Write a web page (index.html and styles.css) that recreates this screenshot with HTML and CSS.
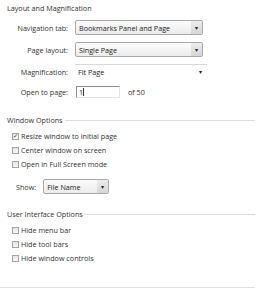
FILE: index.html
```html
<!DOCTYPE html>
<html lang="en">
<head>
    <meta charset="UTF-8">
    <meta name="viewport" content="width=device-width, initial-scale=1.0">
    <title>Initial View</title>
    <link rel="stylesheet" href="styles.css">
</head>
<body>
    <div class="panel">
        <div class="section-title plain">Layout and Magnification</div>
        <div class="form-grid">
            <label class="form-label">Navigation tab:</label>
            <div class="dropdown wide">
                <span class="dropdown-text">Bookmarks Panel and Page</span>
                <span class="dropdown-btn">&#9662;</span>
            </div>

            <label class="form-label">Page layout:</label>
            <div class="dropdown wide">
                <span class="dropdown-text">Single Page</span>
                <span class="dropdown-btn">&#9662;</span>
            </div>

            <label class="form-label">Magnification:</label>
            <div class="combo">
                <span class="dropdown-text">Fit Page</span>
                <span class="combo-arrow">&#9662;</span>
            </div>

            <label class="form-label">Open to page:</label>
            <div class="page-row">
                <div class="page-input">1<span class="caret"></span></div>
                <span class="page-total">of 50</span>
            </div>
        </div>

        <div class="section-title spaced">Window Options</div>
        <div class="check-list">
            <div class="check-row"><span class="check-box checked">&#10003;</span>Resize window to initial page</div>
            <div class="check-row"><span class="check-box"></span>Center window on screen</div>
            <div class="check-row"><span class="check-box"></span>Open in Full Screen mode</div>
        </div>
        <div class="show-row">
            <label class="show-label">Show:</label>
            <div class="dropdown narrow">
                <span class="dropdown-text">File Name</span>
                <span class="dropdown-btn">&#9662;</span>
            </div>
        </div>

        <div class="section-title ui-title">User Interface Options</div>
        <div class="check-list">
            <div class="check-row"><span class="check-box"></span>Hide menu bar</div>
            <div class="check-row"><span class="check-box"></span>Hide tool bars</div>
            <div class="check-row"><span class="check-box"></span>Hide window controls</div>
        </div>
        <div class="bottom-rule"></div>
    </div>
</body>
</html>
```

FILE: styles.css
```css
body {
    margin: 0;
    background-color: #ffffff;
    font-family: "Open Sans", Arial, sans-serif;
    font-size: 7.2px;
    color: #333333;
}
.panel {
    width: 255px;
    padding-top: 3px;
}
.section-title {
    display: flex;
    align-items: center;
    height: 10px;
    padding-left: 7px;
    color: #333333;
}
.section-title::after {
    content: "";
    flex: 1;
    margin-left: 2px;
    border-top: 1px solid #dedede;
}
.section-title.plain::after {
    border-top-color: transparent;
}
.section-title.spaced {
    margin-top: 17px;
}
.section-title.ui-title {
    margin-top: 15px;
}
.form-grid {
    display: grid;
    grid-template-columns: 68px auto;
    grid-template-rows: 15px 15px 15px 12px;
    column-gap: 7px;
    row-gap: 7px;
    margin-top: 7px;
}
.form-label {
    text-align: right;
    align-self: center;
}
.dropdown {
    display: flex;
    align-items: center;
    box-sizing: border-box;
    height: 15px;
    border: 1px solid #a9a9a9;
    border-radius: 2px;
    background: linear-gradient(#fbfbfb, #ececec);
}
.dropdown.wide {
    width: 128px;
}
.dropdown.narrow {
    width: 66px;
}
.dropdown-text {
    flex: 1;
    padding-left: 3px;
    color: #222222;
}
.dropdown-btn {
    width: 11px;
    height: 100%;
    display: flex;
    align-items: center;
    justify-content: center;
    font-size: 6px;
    color: #222222;
    background: linear-gradient(#ececec, #d6d6d6);
}
.combo {
    display: flex;
    align-items: center;
    box-sizing: border-box;
    width: 132px;
    height: 15px;
    border-top: 1px solid #d8d8d8;
}
.combo-arrow {
    width: 8px;
    font-size: 6px;
    color: #222222;
}
.page-row {
    display: flex;
    align-items: center;
    gap: 8px;
}
.page-input {
    display: flex;
    align-items: center;
    box-sizing: border-box;
    width: 44px;
    height: 12px;
    margin-left: 1px;
    padding-left: 2px;
    border-top: 1px solid #8f8f8f;
    border-left: 1px solid #8f8f8f;
    border-right: 1px solid #e4e4e4;
    border-bottom: 1px solid #e4e4e4;
    color: #222222;
}
.caret {
    width: 1px;
    height: 8px;
    background-color: #333333;
}
.check-list {
    margin-top: 4px;
}
.check-row {
    display: flex;
    align-items: center;
    height: 14px;
    padding-left: 12px;
}
.check-box {
    display: flex;
    align-items: center;
    justify-content: center;
    box-sizing: border-box;
    width: 7px;
    height: 7px;
    margin-right: 2px;
    border: 1px solid #a4a4a4;
    background: linear-gradient(#e6e6e6, #f8f8f8);
    font-size: 6px;
    line-height: 1;
    color: #333333;
}
.show-row {
    display: flex;
    align-items: center;
    gap: 7px;
    margin-top: 8px;
    padding-left: 16px;
}
.bottom-rule {
    margin-top: 22px;
    border-top: 1px solid #e2e2e2;
}
```
